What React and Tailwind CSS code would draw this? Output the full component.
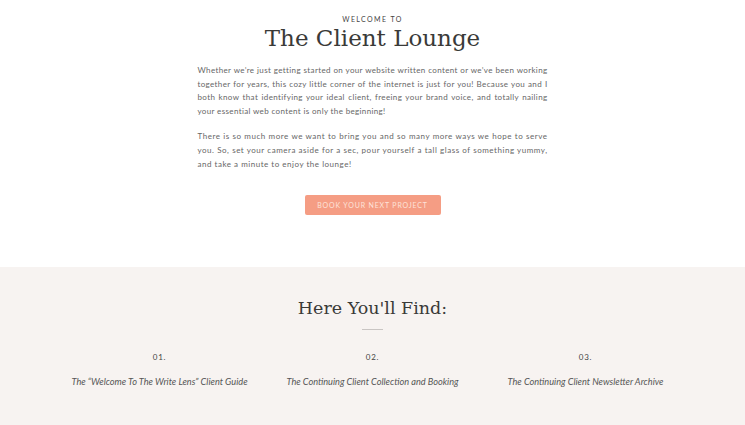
export default function App() {
  const items = [
    { n: "01.", t: "The \u201cWelcome To The Write Lens\u201d Client Guide" },
    { n: "02.", t: "The Continuing Client Collection and Booking" },
    { n: "03.", t: "The Continuing Client Newsletter Archive" },
  ];
  return (
    <div className="w-[745px] h-[425px] overflow-hidden bg-white font-['Lato',sans-serif]">
      <section className="h-[267px] flex flex-col items-center pt-[14px]">
        <div className="text-[7px] tracking-[0.2em] text-[#444] leading-[10px]">WELCOME TO</div>
        <h1 className="text-[23px] leading-[28px] text-[#3a3a38] font-['DejaVu_Serif',serif]">The Client Lounge</h1>
        <div className="mt-[12px] w-[350px] text-[8px] leading-[13.7px] text-[#666] text-justify">
          <p className="tracking-[0.045em]">
            Whether we’re just getting started on your website written content or we’ve been working together for years, this cozy little corner of the internet is just for you! Because you and I both know that identifying your ideal client, freeing your brand voice, and totally nailing your essential web content is only the beginning!
          </p>
          <p className="mt-[11.5px] tracking-[0.065em]">
            There is so much more we want to bring you and so many more ways we hope to serve you. So, set your camera aside for a sec, pour yourself a tall glass of something yummy, and take a minute to enjoy the lounge!
          </p>
        </div>
        <button className="mt-[24px] w-[136px] h-[20px] rounded-[2px] bg-[#f59d84] text-[#fde3da] text-[7px] tracking-[0.12em]">
          BOOK YOUR NEXT PROJECT
        </button>
      </section>
      <section className="h-[158px] bg-[#f7f3f1] flex flex-col items-center pt-[29px]">
        <h2 className="text-[17.5px] leading-[24px] text-[#3a3a38] font-['DejaVu_Serif',serif]">Here You'll Find:</h2>
        <div className="mt-[9px] w-[21px] h-px bg-[#c9c5c3]"></div>
        <div className="mt-[22px] w-[639px] grid grid-cols-3">
          {items.map((it) => (
            <div key={it.n} className="flex flex-col items-center">
              <div className="text-[8px] leading-[10px] text-[#444] tracking-[0.1em]">{it.n}</div>
              <div className="mt-[14px] text-[9.2px] leading-[12px] italic text-[#555]">{it.t}</div>
            </div>
          ))}
        </div>
      </section>
    </div>
  );
}
